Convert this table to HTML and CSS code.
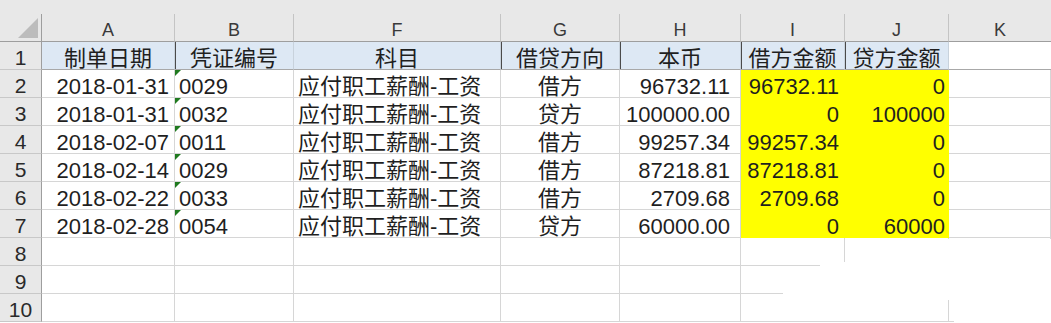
FILE: index.html
```html
<!DOCTYPE html>
<html lang="zh-CN">
<head>
<meta charset="utf-8">
<title>Sheet</title>
<link rel="stylesheet" href="styles.css">
</head>
<body>
<div class="topstrip"></div>
<div class="sheet">
  <div class="corner"><span class="tri"></span></div>
  <div class="ch">A</div><div class="ch">B</div><div class="ch">F</div><div class="ch">G</div><div class="ch">H</div><div class="ch">I</div><div class="ch">J</div><div class="ch last">K</div>

  <div class="rh">1</div>
  <div class="c hd">制单日期</div><div class="c hd dl">凭证编号</div><div class="c hd">科目</div><div class="c hd dl">借贷方向</div><div class="c hd dl">本币</div><div class="c hd dl">借方金额</div><div class="c hd dl">贷方金额</div><div class="c hdk"></div>

  <div class="rh">2</div>
  <div class="c r pa">2018-01-31</div><div class="c l tx">0029</div><div class="c l">应付职工薪酬-工资</div><div class="c m">借方</div><div class="c r ph">96732.11</div><div class="c r y">96732.11</div><div class="c r y pj">0</div><div class="c"></div>

  <div class="rh">3</div>
  <div class="c r pa">2018-01-31</div><div class="c l tx">0032</div><div class="c l">应付职工薪酬-工资</div><div class="c m">贷方</div><div class="c r ph">100000.00</div><div class="c r y">0</div><div class="c r y pj">100000</div><div class="c"></div>

  <div class="rh">4</div>
  <div class="c r pa">2018-02-07</div><div class="c l tx">0011</div><div class="c l">应付职工薪酬-工资</div><div class="c m">借方</div><div class="c r ph">99257.34</div><div class="c r y">99257.34</div><div class="c r y pj">0</div><div class="c"></div>

  <div class="rh">5</div>
  <div class="c r pa">2018-02-14</div><div class="c l tx">0029</div><div class="c l">应付职工薪酬-工资</div><div class="c m">借方</div><div class="c r ph">87218.81</div><div class="c r y">87218.81</div><div class="c r y pj">0</div><div class="c"></div>

  <div class="rh">6</div>
  <div class="c r pa">2018-02-22</div><div class="c l tx">0033</div><div class="c l">应付职工薪酬-工资</div><div class="c m">借方</div><div class="c r ph">2709.68</div><div class="c r y">2709.68</div><div class="c r y pj">0</div><div class="c"></div>

  <div class="rh">7</div>
  <div class="c r pa">2018-02-28</div><div class="c l tx">0054</div><div class="c l">应付职工薪酬-工资</div><div class="c m">贷方</div><div class="c r ph">60000.00</div><div class="c r y">0</div><div class="c r y pj">60000</div><div class="c"></div>

  <div class="rh">8</div>
  <div class="c"></div><div class="c"></div><div class="c"></div><div class="c"></div><div class="c"></div><div class="c"></div><div class="c"></div><div class="c"></div>

  <div class="rh">9</div>
  <div class="c"></div><div class="c"></div><div class="c"></div><div class="c"></div><div class="c"></div><div class="c"></div><div class="c"></div><div class="c"></div>

  <div class="rh">10</div>
  <div class="c"></div><div class="c"></div><div class="c"></div><div class="c"></div><div class="c"></div><div class="c"></div><div class="c"></div><div class="c"></div>
</div>
<svg class="erase" width="1051" height="323" viewBox="0 0 1051 323" aria-hidden="true">
  <polygon points="997,239 1051,239 1051,323 954,323 954,300 944,300 944,321 783,321 783,289 820,289 820,262 850,262 850,239" fill="#ffffff"/>
</svg>
</body>
</html>
```

FILE: styles.css
```css
html, body {
  margin: 0;
  padding: 0;
  background: #ffffff;
}

body {
  position: relative;
  width: 1051px;
  height: 323px;
  overflow: hidden;
  font-family: "Liberation Sans", "Noto Sans CJK SC", sans-serif;
  color: #1f1f1f;
}

.topstrip {
  height: 14px;
  background: #e8e8e8;
}

.sheet {
  display: grid;
  grid-template-columns: 42px 133px 119px 207px 119px 121px 104px 104px 1fr;
  grid-auto-rows: 28px;
}

.corner {
  position: relative;
  background: #e8e8e8;
  border-right: 1px solid #9e9e9e;
  border-bottom: 1px solid #9e9e9e;
  box-sizing: border-box;
}

.tri {
  position: absolute;
  right: 3px;
  bottom: 3px;
  width: 20px;
  height: 20px;
  background: #bcbcbc;
  clip-path: polygon(100% 0, 100% 100%, 0 100%);
}

.ch {
  background: #e8e8e8;
  border-right: 1px solid #c4c4c4;
  border-bottom: 1px solid #9e9e9e;
  box-sizing: border-box;
  text-align: center;
  font-size: 18px;
  line-height: 24px;
  padding-top: 4px;
  color: #3a3a3a;
}

.ch.last {
  border-right: none;
}

.rh {
  background: #e8e8e8;
  border-right: 1px solid #9e9e9e;
  border-bottom: 1px solid #c8c8c8;
  box-sizing: border-box;
  text-align: center;
  font-size: 21px;
  line-height: 22px;
  padding-top: 5px;
  color: #2a2a2a;
}

.c {
  position: relative;
  border-right: 1px solid #d6d6d6;
  border-bottom: 1px solid #d6d6d6;
  box-sizing: border-box;
  font-size: 22px;
  line-height: 20px;
  padding-top: 7px;
  white-space: nowrap;
  overflow: visible;
}

.hd {
  background: #dde8f4;
  text-align: center;
  border-bottom-color: #a8a8a8;
  border-right-color: #c8d2dc;
}

.hd.dl {
  box-shadow: inset 1px 0 0 #4a4a4a;
}

.hdk {
  border-bottom-color: #a8a8a8;
  border-right: none;
}

.r { text-align: right; }
.l { text-align: left; padding-left: 4px; }
.m { text-align: center; }

.pa { padding-right: 5px; }
.ph { padding-right: 10px; }
.pj { padding-right: 3px; }
.y {
  background: #ffff00;
  border-right-color: #ffff00;
  border-bottom-color: #ffff00;
  padding-right: 5px;
}
.y.pj { padding-right: 3px; }

.tx::before {
  content: "";
  position: absolute;
  left: 0;
  top: 0;
  width: 6px;
  height: 6px;
  background: #1f7a1f;
  clip-path: polygon(0 0, 100% 0, 0 100%);
}

.erase {
  position: absolute;
  left: 0;
  top: 0;
  pointer-events: none;
}
```
